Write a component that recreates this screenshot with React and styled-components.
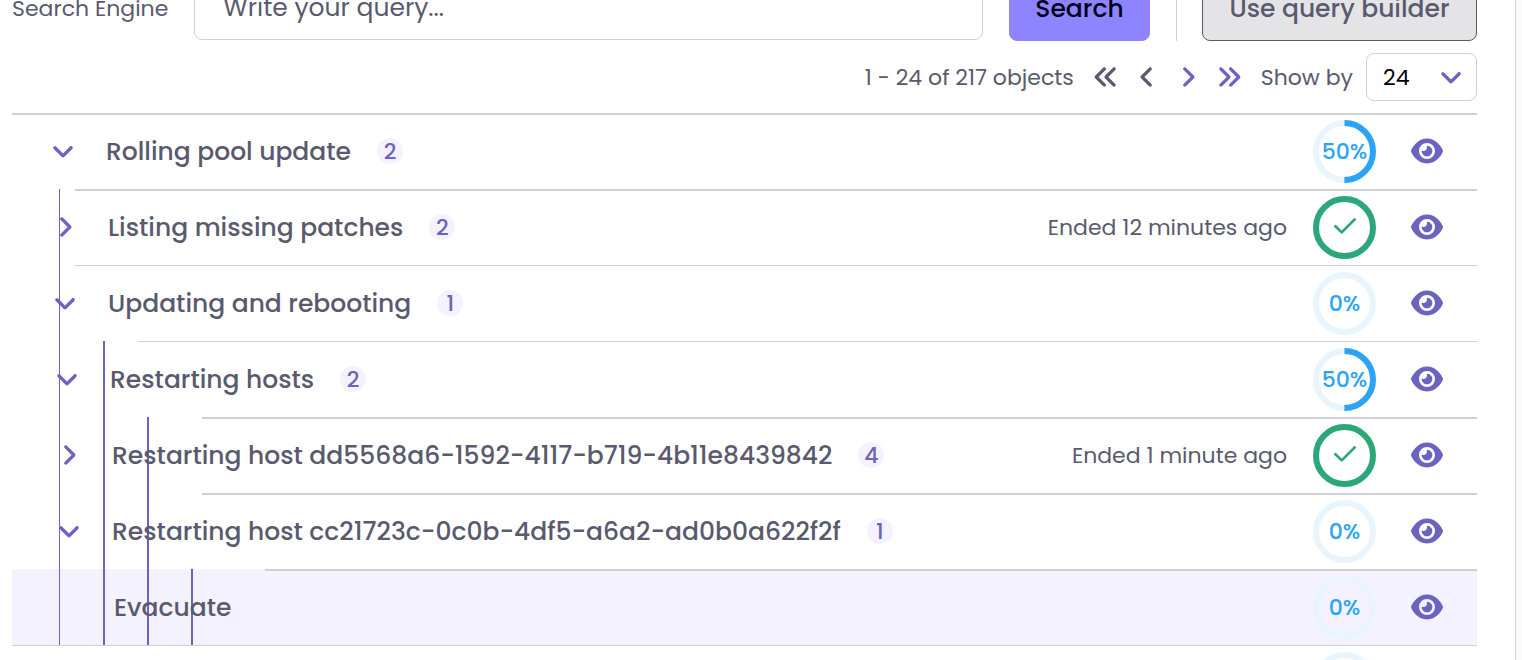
import React, { useState } from 'react';
import styled, { createGlobalStyle } from 'styled-components';
import {
  FaAngleDown,
  FaAngleLeft,
  FaAngleRight,
  FaAnglesLeft,
  FaAnglesRight,
  FaEye,
} from 'react-icons/fa6';

const colors = {
  text: '#595a6e',
  brand: '#6b63bf',
  brandLight: '#f4f2ff',
  brandButton: '#8f84ff',
  border: '#cfd0d6',
  info: '#2ca3f5',
  infoLight: '#e8f5fe',
  success: '#2ca878',
};

const GlobalStyle = createGlobalStyle`
  *, *::before, *::after {
    box-sizing: border-box;
  }

  body {
    margin: 0;
    background: #ffffff;
    color: ${colors.text};
    font-family: Poppins, Inter, sans-serif;
    font-size: 22px;
    line-height: 33px;
  }

  button, input, select {
    font: inherit;
    color: inherit;
  }
`;

// Page shell
const Page = styled.div`
  display: flex;
  height: 100vh;
  overflow: hidden;
`;

const Main = styled.main`
  flex: 1;
  min-width: 0;
  padding: 0 38px 0 12px;
  border-right: 1px solid ${colors.border};
`;

const SidePanel = styled.aside`
  width: 6px;
  background: #fafafa;
`;

// Search bar, partly scrolled out of view
const SearchBar = styled.form`
  display: flex;
  align-items: center;
  gap: 26px;
  margin-top: -25px;
`;

const SearchLabel = styled.label`
  white-space: nowrap;
`;

const SearchInput = styled.input`
  flex: 1;
  min-width: 0;
  height: 64px;
  padding: 0 28px;
  border: 1px solid ${colors.border};
  border-radius: 8px;
  background: #ffffff;
  font-size: 25px;

  &::placeholder {
    color: ${colors.text};
    opacity: 1;
  }
`;

const Button = styled.button`
  height: 66px;
  min-width: ${({ $wide }) => ($wide ? 275 : 141)}px;
  padding: 0 24px;
  border: 1px solid ${({ $primary }) => ($primary ? colors.brandButton : colors.text)};
  border-radius: 8px;
  background: ${({ $primary }) => ($primary ? colors.brandButton : '#e4e4e6')};
  color: ${({ $primary }) => ($primary ? '#000019' : colors.text)};
  font-size: 25px;
  font-weight: 500;
  white-space: nowrap;
`;

const Separator = styled.span`
  align-self: stretch;
  width: 1px;
  margin-right: -1px;
  background: ${colors.border};
`;

// Pagination
const Pagination = styled.nav`
  display: flex;
  align-items: center;
  justify-content: flex-end;
  gap: 19px;
  padding: 12px 0;
`;

const PageButtons = styled.div`
  display: flex;
  gap: 15px;
`;

const IconButton = styled.button`
  display: flex;
  align-items: center;
  justify-content: center;
  padding: 0;
  border: 0;
  background: none;
  color: ${colors.brand};
  font-size: 26px;
  cursor: pointer;

  &:disabled {
    color: ${colors.text};
    cursor: default;
  }
`;

const PageSize = styled.label`
  display: flex;
  align-items: center;
  gap: 13px;
`;

const SelectBox = styled.span`
  position: relative;
  color: ${colors.brand};

  svg {
    position: absolute;
    top: 11px;
    right: 13px;
    font-size: 26px;
    pointer-events: none;
  }
`;

const Select = styled.select`
  display: block;
  width: 111px;
  height: 48px;
  padding: 0 16px;
  border: 1px solid ${colors.border};
  border-radius: 8px;
  background: #ffffff;
  color: #000000;
  appearance: none;
`;

// Task tree
const Tree = styled.ul`
  margin: 0;
  padding: 0;
  list-style: none;
`;

const Row = styled.li`
  position: relative;
  display: flex;
  align-items: center;
  height: 76px;
  padding: 0 34px 0 ${({ $depth }) => 38 + $depth * 2}px;
  background: ${({ $active }) => ($active ? colors.brandLight : 'transparent')};

  &::before {
    content: '';
    position: absolute;
    top: 0;
    right: 0;
    left: ${({ $depth }) => $depth * 63 + ($depth > 2 ? 1 : 0)}px;
    height: ${({ $thin }) => ($thin ? 1 : 2)}px;
    background: ${colors.border};
  }
`;

// Vertical guides, drawn across the row
const Guides = styled.span`
  position: absolute;
  inset: 0;
  display: flex;
  padding-left: 47px;
  pointer-events: none;
`;

const Guide = styled.span`
  width: 44px;
  border-left: 2px solid ${colors.brand};

  &:first-child {
    border-left-width: 1px;
  }
`;

const ToggleSlot = styled.span`
  position: relative;
  display: flex;
  width: 56px;
`;

const TaskName = styled.span`
  position: relative;
  font-size: 25px;
  font-weight: 500;
  white-space: nowrap;
`;

const Count = styled.span`
  min-width: 26px;
  height: 26px;
  margin-left: 26px;
  border-radius: 13px;
  background: ${colors.brandLight};
  color: ${colors.brand};
  font-weight: 500;
  line-height: 27px;
  text-align: center;
`;

const RowEnd = styled.div`
  display: flex;
  align-items: center;
  margin-left: auto;
`;

const EndedAt = styled.span`
  margin-right: 26px;
`;

const ProgressBox = styled.div`
  display: grid;
  place-items: center;
  margin-right: 35px;
  color: ${({ $done }) => ($done ? colors.success : colors.info)};
  font-weight: 500;

  > * {
    grid-area: 1 / 1;
  }
`;

const CheckMark = styled.svg`
  margin-bottom: 3px;
`;

const ViewButton = styled(IconButton)`
  width: 32px;
  font-size: 32px;
`;

const RING_LENGTH = 2 * Math.PI * 28.5;

const ProgressCircle = ({ value }) => {
  const done = value === 100;

  return (
    <ProgressBox $done={done}>
      <svg width="63" height="63" viewBox="0 0 63 63" fill="none" strokeWidth="6">
        <circle cx="31.5" cy="31.5" r="28.5" stroke={colors.infoLight} />
        {value > 0 && (
          <circle
            cx="31.5"
            cy="31.5"
            r="28.5"
            stroke="currentColor"
            strokeDasharray={`${(RING_LENGTH * value) / 100} ${RING_LENGTH}`}
            transform="rotate(-90 31.5 31.5)"
          />
        )}
      </svg>
      {done ? (
        <CheckMark width="22" height="16" viewBox="0 0 22 16" fill="none">
          <path
            d="M1.4 8.2 7.7 14.4 20.6 1.5"
            stroke="currentColor"
            strokeWidth="2.6"
            strokeLinecap="round"
            strokeLinejoin="round"
          />
        </CheckMark>
      ) : (
        <span>{value}%</span>
      )}
    </ProgressBox>
  );
};

const tasks = [
  { id: 1, name: 'Rolling pool update', depth: 0, count: 2, progress: 50, open: true },
  { id: 2, name: 'Listing missing patches', depth: 1, count: 2, progress: 100, ended: 'Ended 12 minutes ago' },
  { id: 3, name: 'Updating and rebooting', depth: 1, count: 1, progress: 0, open: true, thin: true },
  { id: 4, name: 'Restarting hosts', depth: 2, count: 2, progress: 50, open: true, thin: true },
  { id: 5, name: 'Restarting host dd5568a6-1592-4117-b719-4b11e8439842', depth: 3, count: 4, progress: 100, ended: 'Ended 1 minute ago' },
  { id: 6, name: 'Restarting host cc21723c-0c0b-4df5-a6a2-ad0b0a622f2f', depth: 3, count: 1, progress: 0, open: true },
  { id: 7, name: 'Evacuate', depth: 4, progress: 0, active: true },
  { id: 8, name: 'Rolling pool update', depth: 0, count: 2, progress: 0, thin: true },
];

const TaskRow = ({ task }) => (
  <Row $depth={task.depth} $active={task.active} $thin={task.thin}>
    <Guides>
      {Array.from({ length: task.depth }, (_, i) => (
        <Guide key={i} />
      ))}
    </Guides>
    <ToggleSlot>
      {task.count && (
        <IconButton type="button" aria-label={`Toggle ${task.name}`} aria-expanded={!!task.open}>
          {task.open ? <FaAngleDown /> : <FaAngleRight />}
        </IconButton>
      )}
    </ToggleSlot>
    <TaskName>{task.name}</TaskName>
    {task.count && <Count>{task.count}</Count>}
    <RowEnd>
      {task.ended && <EndedAt>{task.ended}</EndedAt>}
      <ProgressCircle value={task.progress} />
      <ViewButton type="button" aria-label={`View ${task.name}`}>
        <FaEye />
      </ViewButton>
    </RowEnd>
  </Row>
);

const App = () => {
  const [query, setQuery] = useState('');
  const [pageSize, setPageSize] = useState('24');

  return (
    <>
      <GlobalStyle />
      <Page>
        <Main>
          <SearchBar onSubmit={e => e.preventDefault()}>
            <SearchLabel htmlFor="query">Search Engine</SearchLabel>
            <SearchInput
              id="query"
              placeholder="Write your query..."
              value={query}
              onChange={e => setQuery(e.target.value)}
            />
            <Button type="submit" $primary>Search</Button>
            <Separator />
            <Button type="button" $wide>Use query builder</Button>
          </SearchBar>

          <Pagination>
            <span>1 - 24 of 217 objects</span>
            <PageButtons>
              <IconButton type="button" aria-label="First page" disabled><FaAnglesLeft /></IconButton>
              <IconButton type="button" aria-label="Previous page" disabled><FaAngleLeft /></IconButton>
              <IconButton type="button" aria-label="Next page"><FaAngleRight /></IconButton>
              <IconButton type="button" aria-label="Last page"><FaAnglesRight /></IconButton>
            </PageButtons>
            <PageSize>
              Show by
              <SelectBox>
                <Select value={pageSize} onChange={e => setPageSize(e.target.value)}>
                  <option>24</option>
                  <option>50</option>
                  <option>100</option>
                </Select>
                <FaAngleDown />
              </SelectBox>
            </PageSize>
          </Pagination>

          <Tree>
            {tasks.map(task => (
              <TaskRow key={task.id} task={task} />
            ))}
          </Tree>
        </Main>
        <SidePanel />
      </Page>
    </>
  );
};

export default App;
